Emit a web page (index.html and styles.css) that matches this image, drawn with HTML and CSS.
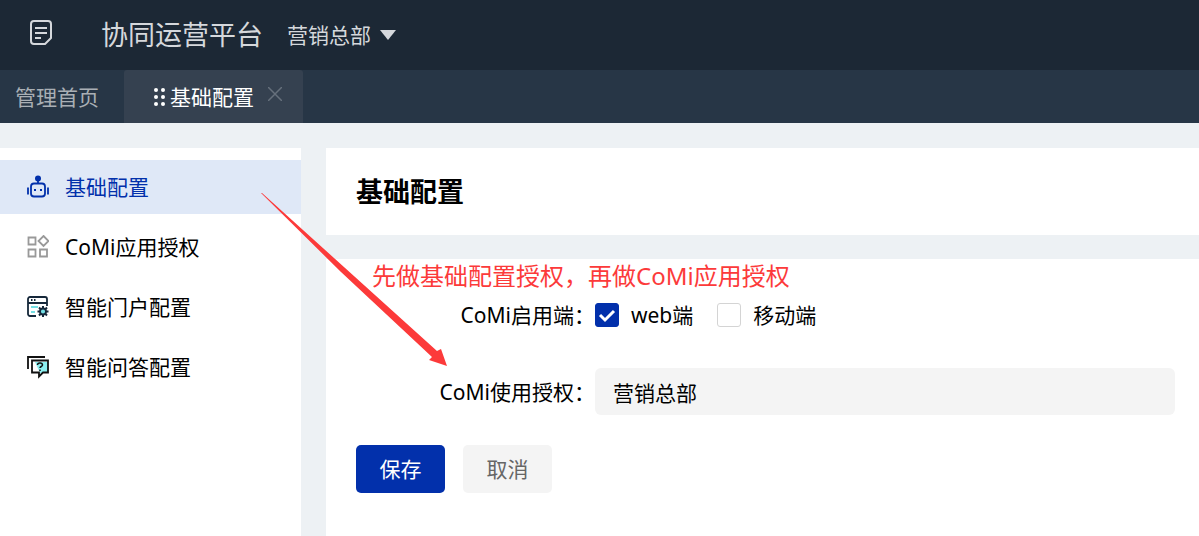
FILE: index.html
```html
<!DOCTYPE html>
<html lang="zh-CN">
<head>
  <meta charset="UTF-8">
  <meta name="viewport" content="width=device-width, initial-scale=1.0">
  <title>基础配置</title>
  <link rel="stylesheet" href="styles.css">
</head>
<body>
  <header class="topbar">
    <svg class="logo" width="24" height="26" viewBox="0 0 24 26" fill="none" stroke="#d5d8dc" stroke-width="2" stroke-linejoin="round">
      <path d="M5 1h14a3 3 0 0 1 3 3v14l-6 6H5a3 3 0 0 1-3-3V4a3 3 0 0 1 3-3z"/>
      <path d="M6 8h12M6 13h12M6 18h6"/>
    </svg>
    <span class="platform">协同运营平台</span>
    <div class="org">
      <select class="org-select" aria-label="单位">
        <option>营销总部</option>
      </select>
      <svg width="16" height="10" viewBox="0 0 16 10"><path d="M0 0h16L8 10z" fill="#d5d8dc"/></svg>
    </div>
  </header>

  <nav class="tabs">
    <a class="tab" href="#">管理首页</a>
    <div class="tab active">
      <svg width="12" height="18" viewBox="0 0 12 18" fill="#fff">
        <circle cx="2" cy="2" r="2"/><circle cx="9" cy="2" r="2"/>
        <circle cx="2" cy="9" r="2"/><circle cx="9" cy="9" r="2"/>
        <circle cx="2" cy="16" r="2"/><circle cx="9" cy="16" r="2"/>
      </svg>
      <a href="#">基础配置</a>
      <button class="close" type="button" aria-label="关闭">
        <svg width="14" height="14" viewBox="0 0 14 14" stroke="#66707c" stroke-width="1.5"><path d="M0 0l14 14M14 0L0 14"/></svg>
      </button>
    </div>
  </nav>

  <div class="layout">
    <nav class="sidebar">
      <a class="menu-item active" href="#">
        <svg width="22" height="24" viewBox="0 0 22 24" fill="none" stroke="#0230ab" stroke-width="1.8">
          <circle cx="11" cy="3.5" r="3" fill="#0230ab" stroke="none"/>
          <path d="M11 5v4M1 12.500v7M21 12.500v7"/>
          <rect x="4" y="8.500" width="14" height="13" rx="3"/>
          <path d="M7 15h2M13 15h2" stroke-width="2"/>
        </svg>
        基础配置
      </a>
      <a class="menu-item" href="#">
        <svg width="22" height="24" viewBox="0 0 22 24" fill="none" stroke="#999" stroke-width="1.8">
          <path d="M1.500 2.500h7v7h-7zM1.500 14.500h7v7h-7zM13 14.500h7v7h-7zM16.500 1l5 5-5 5-5-5z"/>
        </svg>
        CoMi应用授权
      </a>
      <a class="menu-item" href="#">
        <svg width="22" height="24" viewBox="0 0 22 24" fill="none" stroke="#16283a" stroke-width="1.8">
          <path d="M9 21H3a2 2 0 0 1-2-2V4a2 2 0 0 1 2-2h15a2 2 0 0 1 2 2v7M1 8h19"/>
          <path d="M4 5h1.500M7 5h1.500"/>
          <path d="M4 12h7M4 17h4" stroke="#74dfe4"/>
          <path d="M16 11v11M10.500 16.500h11M12 12.500l8 8M20 12.500l-8 8" stroke-width="2"/>
          <circle cx="16" cy="16.500" r="3" fill="#74dfe4"/>
        </svg>
        智能门户配置
      </a>
      <a class="menu-item" href="#">
        <svg width="22" height="24" viewBox="0 0 22 24" fill="none" stroke="#111" stroke-width="1.8">
          <path d="M1 14V2h17"/>
          <path d="M8 7h13v11H13z" fill="#8ceff0" stroke="none"/>
          <path d="M5 5.500h16v12h-5l-4 4v-4H5z"/>
          <path d="M10.500 10c0-3 5-2.500 5 0 0 1.500-2.500 1.500-2.500 3M13 14.500v1.500" stroke-width="1.500"/>
        </svg>
        智能问答配置
      </a>
    </nav>

    <main class="content">
      <section class="card page-title">
        <h1>基础配置</h1>
      </section>

      <form class="card config-form">
        <p class="note">先做基础配置授权，再做CoMi应用授权</p>
        <div class="row" role="group" aria-labelledby="terminal-label">
          <span class="row-label" id="terminal-label">CoMi启用端：</span>
          <label class="check"><input type="checkbox" checked>web端</label>
          <label class="check"><input type="checkbox">移动端</label>
        </div>
        <div class="row">
          <label class="row-label" for="scope">CoMi使用授权：</label>
          <input class="text-input" type="text" id="scope" value="营销总部">
        </div>
        <div class="actions">
          <button class="btn primary" type="submit">保存</button>
          <button class="btn" type="button">取消</button>
        </div>
      </form>

      <!-- arrow from the menu to the authorization field -->
      <svg class="arrow" width="188" height="176" viewBox="0 0 188 176">
        <path d="M0 0L1 0 176 158 180 156 186 173 168 167 171 164 80 79z" fill="#fc3a3a"/>
      </svg>
    </main>
  </div>
</body>
</html>
```

FILE: styles.css
```css
* {
  box-sizing: border-box;
}

body {
  display: flex;
  flex-direction: column;
  min-height: 100vh;
  margin: 0;
  background-color: #edf1f4;
  color: #000;
  font-family: "Noto Sans", "Noto Sans CJK SC", sans-serif;
  font-size: 21px;
  line-height: 30px;
}

a {
  color: inherit;
  text-decoration: none;
}

input, select, button {
  font: inherit;
}

svg {
  flex: none;
}

.topbar {
  display: flex;
  align-items: center;
  height: 70px;
  padding: 0 29px;
  background-color: #1c2835;
  color: #d5d8dc;
}

.logo {
  margin: 0 48px 4px 0;
}

.platform {
  font-size: 27px;
}

.org {
  display: flex;
  align-items: center;
  gap: 9px;
  margin-left: 24px;
}

.org-select {
  appearance: none;
  padding: 0;
  border: none;
  background: none;
  color: inherit;
}

.tabs {
  display: flex;
  height: 53px;
  background-color: #273646;
  color: #a9afb5;
}

.tab {
  display: flex;
  align-items: center;
  padding: 0 25px 0 15px;
}

.tab.active {
  gap: 4px;
  padding: 0 21px 0 30px;
  border-radius: 3px 3px 0 0;
  background-color: #354150;
  color: #fff;
}

.close {
  display: flex;
  margin: 0 0 5px 10px;
  padding: 0;
  border: none;
  background: none;
  cursor: pointer;
}

.layout {
  display: flex;
  flex: 1;
  gap: 25px;
  padding-top: 25px;
}

.sidebar {
  display: flex;
  flex: none;
  flex-direction: column;
  gap: 6px;
  width: 301px;
  padding-top: 12px;
  background-color: #fff;
}

.menu-item {
  display: flex;
  align-items: center;
  gap: 16px;
  height: 54px;
  padding-left: 27px;
}

.menu-item.active {
  background-color: #dfe8f7;
  color: #0230ab;
}

.content {
  position: relative;
  display: flex;
  flex: 1;
  flex-direction: column;
  gap: 24px;
}

.card {
  padding: 0 24px 0 30px;
  background-color: #fff;
}

.page-title {
  display: flex;
  align-items: center;
  height: 87px;
}

h1 {
  margin: 0;
  font-size: 27px;
}

.config-form {
  position: relative;
  flex: 1;
  padding-top: 32px;
}

.note {
  position: absolute;
  top: 2px;
  left: 46px;
  margin: 0;
  color: #fc3a3a;
  font-size: 24px;
}

.row {
  display: flex;
  align-items: center;
  min-height: 47px;
  margin-bottom: 30px;
}

.row-label {
  flex: none;
  width: 239px;
  text-align: right;
}

.check {
  display: flex;
  align-items: center;
  gap: 12px;
  margin-right: 24px;
}

.check input {
  appearance: none;
  width: 24px;
  height: 24px;
  margin: 0;
  border: 1px solid #d4d4d4;
  border-radius: 3px;
  background-color: #fff;
}

.check input:checked {
  border-color: #0230ab;
  background: #0230ab url("data:image/svg+xml,%3Csvg xmlns='http://www.w3.org/2000/svg' viewBox='0 0 22 22'%3E%3Cpath d='M4 11l5 5 9-9' fill='none' stroke='white' stroke-width='3'/%3E%3C/svg%3E");
}

.text-input {
  flex: 1;
  min-width: 0;
  height: 47px;
  padding: 0 18px;
  border: none;
  border-radius: 6px;
  background-color: #f4f4f4;
  color: #000;
}

.actions {
  display: flex;
  gap: 18px;
}

.btn {
  width: 89px;
  height: 48px;
  padding: 0;
  border: none;
  border-radius: 5px;
  background-color: #f4f4f4;
  color: #666;
  cursor: pointer;
}

.btn.primary {
  background-color: #0230ab;
  color: #fff;
}

.arrow {
  position: absolute;
  top: 45px;
  left: -65px;
  pointer-events: none;
}
```
